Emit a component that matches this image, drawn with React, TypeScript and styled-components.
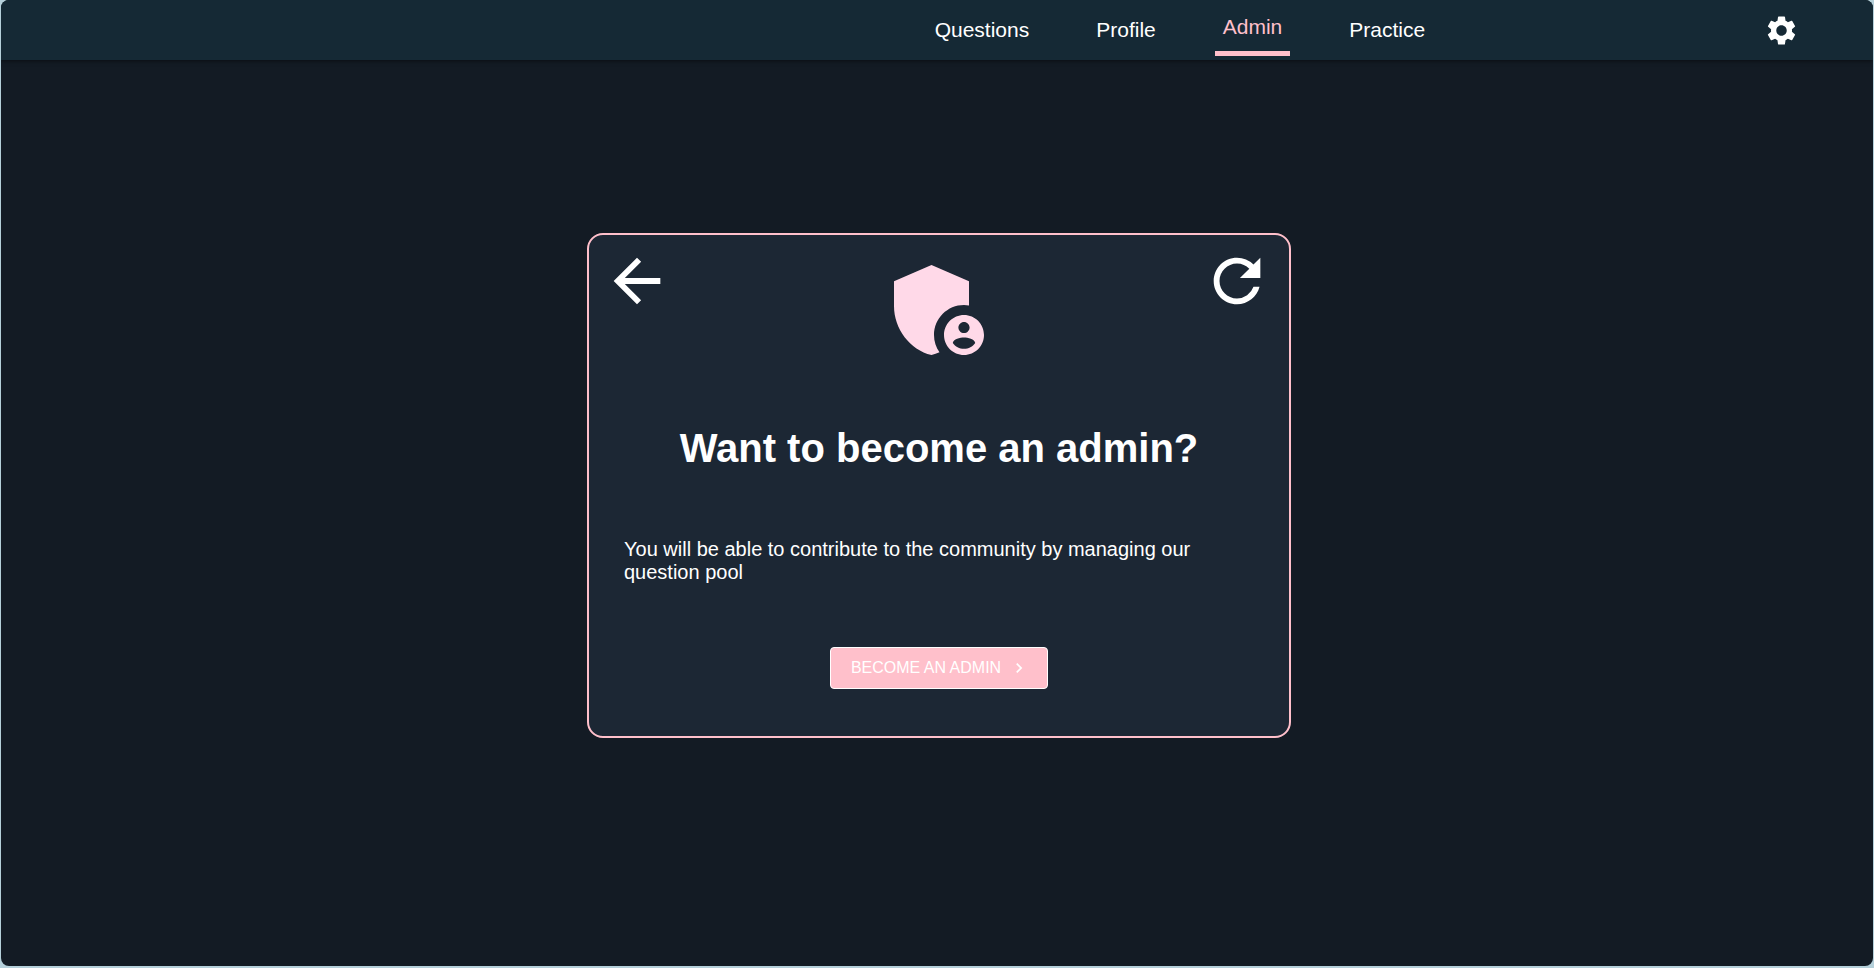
import React from "react";
import styled, { createGlobalStyle } from "styled-components";
import {
  MdAdminPanelSettings,
  MdArrowBack,
  MdChevronRight,
  MdRefresh,
  MdSettings,
} from "react-icons/md";

const GlobalStyle = createGlobalStyle`
  *, *::before, *::after { box-sizing: border-box; }
  html, body { margin: 0; background: #b5d0da; }
  body { font-family: Arial, "Liberation Sans", sans-serif; color: #fff; }
`;

const Page = styled.div`
  display: flex;
  flex-direction: column;
  min-height: calc(100vh - 2px);
  margin: 0 1px 2px;
  border-radius: 8px;
  overflow: hidden;
  background: #131b24;
`;

const Header = styled.header`
  display: flex;
  align-items: center;
  height: 60px;
  padding: 0 74px;
  background: #152935;
  box-shadow: 0 1px 4px rgba(0, 0, 0, 0.5);
`;

const Nav = styled.nav`
  display: flex;
  align-items: center;
  gap: 51px;
  margin-left: 49.4%;
`;

const NavLink = styled.a<{ $active?: boolean }>`
  padding: 11px 8px 13px;
  font-size: 21px;
  line-height: 23px;
  text-decoration: none;
  color: ${(p) => (p.$active ? "#ffc0cb" : "#fff")};
  border-bottom: ${(p) => (p.$active ? "5px solid #ffc0cb" : "none")};
`;

const IconButton = styled.button`
  display: flex;
  padding: 0;
  border: none;
  background: none;
  color: #fff;
  cursor: pointer;
`;

const SettingsButton = styled(IconButton)`
  margin-left: auto;
`;

const Main = styled.main`
  display: flex;
  flex: 1;
  align-items: center;
  justify-content: center;
  padding: 0 24px 56px;
`;

const Card = styled.section`
  width: 100%;
  max-width: 704px;
  margin-left: 4px;
  border: 2px solid #ffc0cb;
  border-radius: 16px;
  background: #1c2734;
`;

const CardTop = styled.div`
  display: grid;
  grid-template-columns: 1fr auto 1fr;
  align-items: start;
  padding-top: 11px;
`;

const BackButton = styled(IconButton)`
  justify-self: start;
  margin-left: 13px;
`;

const RefreshButton = styled(IconButton)`
  justify-self: end;
  margin-right: 17px;
`;

const Emblem = styled.div`
  display: flex;
  padding-top: 4px;
  color: #ffd9e8;
`;

const CardBody = styled.div`
  display: flex;
  flex-direction: column;
  align-items: center;
  padding: 55px 35px 47px;
`;

const Title = styled.h1`
  margin: 0;
  font-size: 40px;
  line-height: 46px;
  text-align: center;
`;

const Text = styled.p`
  width: 100%;
  margin: 67px 0 0;
  font-size: 20px;
  line-height: 23px;
`;

const AdminButton = styled.button`
  display: flex;
  align-items: center;
  gap: 8px;
  height: 42px;
  margin-top: 63px;
  padding: 0 18px 0 20px;
  border: 1px solid #fff;
  border-radius: 4px;
  background: #ffc0cb;
  color: #fff;
  font-family: inherit;
  font-size: 16px;
  cursor: pointer;
`;

const links = ["Questions", "Profile", "Admin", "Practice"];

export default function App() {
  return (
    <>
      <GlobalStyle />
      <Page>
        <Header>
          <Nav aria-label="Main">
            {links.map((name) => (
              <NavLink
                key={name}
                href={`#${name.toLowerCase()}`}
                $active={name === "Admin"}
                aria-current={name === "Admin" ? "page" : undefined}
              >
                {name}
              </NavLink>
            ))}
          </Nav>
          <SettingsButton type="button" aria-label="Settings">
            <MdSettings size={35} />
          </SettingsButton>
        </Header>
        <Main>
          <Card>
            <CardTop>
              <BackButton type="button" aria-label="Back">
                <MdArrowBack size={70} />
              </BackButton>
              <Emblem>
                <MdAdminPanelSettings size={120} />
              </Emblem>
              <RefreshButton type="button" aria-label="Refresh">
                <MdRefresh size={70} />
              </RefreshButton>
            </CardTop>
            <CardBody>
              <Title>Want to become an admin?</Title>
              <Text>
                You will be able to contribute to the community by managing our question pool
              </Text>
              <AdminButton type="button">
                BECOME AN ADMIN
                <MdChevronRight size={20} />
              </AdminButton>
            </CardBody>
          </Card>
        </Main>
      </Page>
    </>
  );
}
